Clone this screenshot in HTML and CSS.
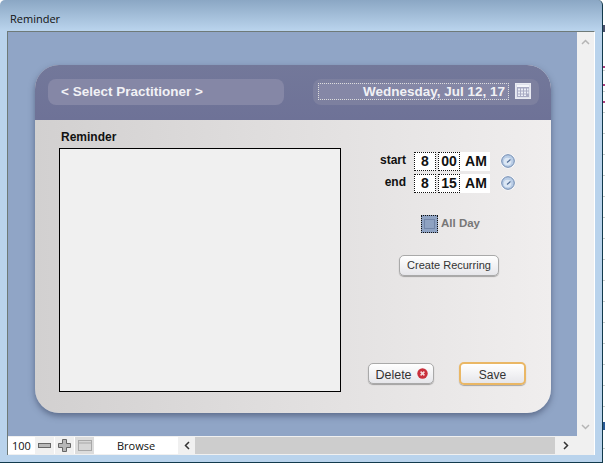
FILE: index.html
```html
<!DOCTYPE html>
<html lang="en">

<head>
    <meta charset="UTF-8">
    <title>Reminder</title>
    <link rel="stylesheet" href="styles.css">
</head>

<body>
    <div class="window">
        <div class="titlebar">Reminder</div>

        <div class="client">
            <div class="top-row">
                <div class="canvas">
                    <div class="card">
                        <div class="card-head">
                            <div class="pill pill-select">&lt; Select Practitioner &gt;</div>
                            <div class="pill pill-date">
                                <div class="date-field">Wednesday, Jul 12, 17</div>
                                <svg class="cal-icon" width="16" height="16" viewBox="0 0 16 16">
                                    <rect x="0.5" y="0.5" width="15" height="15" fill="#dfe1ec" stroke="#e9eaf2"/>
                                    <rect x="2" y="2" width="12" height="12" fill="#a9abc4"/>
                                    <rect x="2" y="2" width="12" height="2" fill="#f4f5fa"/>
                                    <path d="M3 5.5h2v2H3zM6 5.5h2v2H6zM9 5.5h2v2H9zM12 5.5h1.5v2H12zM3 8.500h2v2H3zM6 8.500h2v2H6zM9 8.500h2v2H9zM12 8.500h1.500v2H12zM3 11.500h2v1.500H3zM6 11.500h2v1.500H6zM9 11.500h2v1.500H9z" fill="#eceef6"/>
                                </svg>
                            </div>
                        </div>

                        <div class="card-body">
                            <div class="note-col">
                                <div class="note-label">Reminder</div>
                                <div class="note-box"></div>
                            </div>

                            <div class="side-col">
                                <div class="time-row">
                                    <span class="time-label">start</span>
                                    <span class="time-cell dotted">8</span>
                                    <span class="time-cell dotted">00</span>
                                    <span class="time-cell ampm">AM</span>
                                    <svg class="clock" width="16" height="16" viewBox="0 0 16 16">
                                        <circle cx="8" cy="8" r="7.500" fill="#fafbfd"/>
                                        <circle cx="8" cy="8" r="6.300" fill="#b9cde6" stroke="#6d87ad"/>
                                        <circle cx="7.500" cy="8.500" r="3.800" fill="#dce7f4"/>
                                        <path d="M7 9.500L10.500 6.500" stroke="#4f6b94" stroke-width="1.200" fill="none"/>
                                    </svg>
                                </div>
                                <div class="time-row">
                                    <span class="time-label">end</span>
                                    <span class="time-cell dotted">8</span>
                                    <span class="time-cell dotted">15</span>
                                    <span class="time-cell ampm">AM</span>
                                    <svg class="clock" width="16" height="16" viewBox="0 0 16 16">
                                        <circle cx="8" cy="8" r="7.500" fill="#fafbfd"/>
                                        <circle cx="8" cy="8" r="6.300" fill="#b9cde6" stroke="#6d87ad"/>
                                        <circle cx="7.500" cy="8.500" r="3.800" fill="#dce7f4"/>
                                        <path d="M7 9.500L10.500 6.500" stroke="#4f6b94" stroke-width="1.200" fill="none"/>
                                    </svg>
                                </div>

                                <div class="allday">
                                    <span class="check"><span class="check-inner"></span></span>
                                    <span class="allday-text">All Day</span>
                                </div>

                                <button class="btn btn-recurring">Create Recurring</button>

                                <div class="actions">
                                    <button class="btn btn-delete"><span class="delete-text">Delete</span>
                                        <svg class="delete-icon" width="11" height="11" viewBox="0 0 11 11">
                                            <circle cx="5.500" cy="5.500" r="5.200" fill="#c9303c"/>
                                            <path d="M3.600 3.600l3.800 3.800M7.400 3.600l-3.800 3.800" stroke="#f6dcdc" stroke-width="1.500"/>
                                        </svg>
                                    </button>
                                    <button class="btn btn-save">Save</button>
                                </div>
                            </div>
                        </div>
                    </div>
                </div>

                <div class="vscroll">
                    <svg width="9" height="6" viewBox="0 0 9 6"><path d="M1 5l3.500-3.500L8 5" fill="none" stroke="#b5b5b5" stroke-width="1.500"/></svg>
                    <svg width="9" height="6" viewBox="0 0 9 6"><path d="M1 1l3.500 3.500L8 1" fill="none" stroke="#b5b5b5" stroke-width="1.500"/></svg>
                </div>
            </div>

            <div class="statusbar">
                <span class="zoom-num">100</span>
                <span class="zoom-btn">
                    <svg width="13" height="5" viewBox="0 0 13 5"><rect x="0.500" y="0.500" width="12" height="4" fill="#b8b8b8" stroke="#666"/></svg>
                </span>
                <span class="zoom-btn">
                    <svg width="13" height="13" viewBox="0 0 13 13"><path d="M4.500.5h4v4h4v4h-4v4h-4v-4h-4v-4h4z" fill="#b8b8b8" stroke="#666"/></svg>
                </span>
                <span class="zoom-btn zoom-btn-dim">
                    <svg width="14" height="11" viewBox="0 0 14 11"><rect x="0.500" y="0.500" width="13" height="10" fill="#d6d6d6" stroke="#a8a8a8"/><path d="M1 3h12" stroke="#a8a8a8"/></svg>
                </span>
                <span class="mode">Browse</span>
                <div class="hscroll">
                    <span class="arrow">
                        <svg width="6" height="9" viewBox="0 0 6 9"><path d="M5 1L1.500 4.500 5 8" fill="none" stroke="#333" stroke-width="1.500"/></svg>
                    </span>
                    <span class="hscroll-track"></span>
                    <span class="arrow arrow-right">
                        <svg width="6" height="9" viewBox="0 0 6 9"><path d="M1 1l3.500 3.500L1 8" fill="none" stroke="#333" stroke-width="1.500"/></svg>
                    </span>
                </div>
            </div>
        </div>
    </div>

    <div class="strip"></div>
</body>

</html>
```

FILE: styles.css
```css
* {
    box-sizing: border-box;
}

html,
body {
    margin: 0;
    height: 464px;
    overflow: hidden;
}

body {
    display: flex;
    font-family: "Liberation Sans", Arial, sans-serif;
    color: #111;
    background-color: #fff;
}

.window {
    flex: none;
    width: 603px;
    height: 463px;
    padding: 0 7px 7px;
    background: linear-gradient(to bottom, #8ba7c4 0, #b9d3ec 30px, #b9d3ec 100%);
    border-right: 1px solid #123a4c;
    border-bottom: 1px solid #123a4c;
    border-radius: 5px 5px 0 0;
}

/* what shows of the window behind */
.strip {
    flex: 1;
    background-color: #fff;
    background-image:
        linear-gradient(#4b4f6a, #4b4f6a),
        linear-gradient(#b0407f, #b0407f),
        linear-gradient(#b0407f, #b0407f),
        linear-gradient(#b0407f, #b0407f),
        linear-gradient(#2a5a96, #2a5a96),
        repeating-linear-gradient(to bottom, #fff 0, #fff 20px, #cfcfcf 20px, #cfcfcf 21px);
    background-size: 100% 7px, 100% 2px, 100% 2px, 100% 2px, 100% 8px, 100% 100%;
    background-position: 0 25px, 0 66px, 0 84px, 0 101px, 0 422px, 0 50px;
    background-repeat: no-repeat;
}

.titlebar {
    height: 31px;
    padding: 11px 0 0 3px;
    font-family: "Open Sans", sans-serif;
    font-size: 11px;
    line-height: 15px;
    color: #111;
}

.client {
    height: 424px;
    display: flex;
    flex-direction: column;
    border-top: 1px solid #6e7a78;
    border-left: 1px solid #6e7a78;
    border-right: 1px solid #fff;
    background-color: #f0f0f0;
}

.top-row {
    flex: 1;
    display: flex;
    min-height: 0;
}

.canvas {
    width: 569px;
    padding: 33px 0 0 27px;
    background-color: #90a5c6;
}

.card {
    width: 516px;
    height: 348px;
    border-radius: 24px;
    overflow: hidden;
    box-shadow: 0 3px 6px rgba(50, 60, 90, 0.55);
    background: linear-gradient(to right, #d2d0d0, #f0eeee);
}

.card-head {
    height: 55px;
    padding: 14px 12px 0 13px;
    display: flex;
    justify-content: space-between;
    background: linear-gradient(to bottom, #73789a, #6e7297);
}

.pill {
    height: 26px;
    border-radius: 8px;
    background-color: #8587a6;
    color: #f1f1f5;
    font-weight: bold;
}

.pill-select {
    width: 236px;
    padding-left: 13px;
    font-size: 13.5px;
    line-height: 25px;
}

.pill-date {
    width: 226px;
    padding: 4px 8px 0 5px;
    display: flex;
    gap: 6px;
    background-color: #7d809f;
}

.date-field {
    width: 191px;
    height: 17px;
    padding-right: 3px;
    border: 1px dotted #111;
    outline: 1px dotted #ddd;
    outline-offset: -1px;
    background-color: #8587a6;
    text-align: right;
    font-size: 13.5px;
    line-height: 16px;
}

.card-body {
    display: flex;
    height: 293px;
    padding: 9px 0 0 24px;
}

.note-col {
    width: 282px;
}

.note-label {
    height: 19px;
    padding-left: 2px;
    font-size: 12px;
    font-weight: bold;
    line-height: 16px;
}

.note-box {
    height: 244px;
    background-color: #f0f0f0;
    border: 1px solid #000;
}

.side-col {
    flex: 1;
    padding-top: 21px;
}

.time-row {
    display: flex;
    align-items: center;
    height: 22px;
    padding-left: 22px;
    font-weight: bold;
}

.time-label {
    width: 51px;
    padding-right: 8px;
    padding-bottom: 2px;
    text-align: right;
    font-size: 12px;
}

.time-cell {
    width: 22px;
    height: 19px;
    background-color: #fff;
    text-align: center;
    font-size: 14px;
    line-height: 19px;
}

.dotted {
    border: 1px dotted #111;
    line-height: 17px;
}

.dotted:nth-child(2) {
    margin-right: 2px;
}

.ampm {
    width: 30px;
    padding-left: 2px;
}

.clock {
    margin-left: 10px;
}

.allday {
    display: flex;
    align-items: center;
    gap: 3px;
    margin: 21px 0 0 80px;
    height: 18px;
}

.check {
    width: 17px;
    height: 18px;
    padding: 3px 2px;
    border: 1px dotted #111;
    background-color: #8ea2c2;
}

.check-inner {
    display: block;
    width: 11px;
    height: 10px;
    border: 1px solid #7286a9;
}

.allday-text {
    padding-bottom: 2px;
    font-size: 11.5px;
    font-weight: bold;
    color: #777;
}

.btn {
    font-family: "Liberation Sans", Arial, sans-serif;
    font-size: 12px;
    color: #333;
    border: 1px solid #a9a9a9;
    border-radius: 5px;
    background: linear-gradient(to bottom, #ffffff, #e6e6ea);
    box-shadow: 0 1px 1px rgba(0, 0, 0, 0.3);
    padding: 0 0 1px;
}

.btn-recurring {
    display: block;
    width: 100px;
    height: 21px;
    margin: 22px 0 0 58px;
    font-size: 11px;
}

.actions {
    display: flex;
    align-items: center;
    margin: 86px 0 0 27px;
    gap: 25px;
}

.btn-delete {
    width: 66px;
    height: 21px;
    padding: 0 0 0 1px;
    font-size: 12.5px;
    display: flex;
    align-items: center;
    justify-content: center;
    gap: 5px;
}

.delete-text {
    padding-top: 2px;
}

.delete-icon {
    margin-bottom: 1px;
}

.btn-save {
    width: 67px;
    height: 23px;
    padding: 2px 0 0;
    border: 2px solid #eab765;
    font-size: 12px;
}

.vscroll {
    width: 17px;
    display: flex;
    flex-direction: column;
    justify-content: space-between;
    align-items: center;
    padding: 7px 0 6px;
    background-color: #f0f0f0;
}

.statusbar {
    height: 17px;
    margin-top: 1px;
    margin-bottom: 1px;
    display: flex;
    align-items: stretch;
    background-color: #fff;
}

.zoom-num {
    width: 26px;
    padding-left: 4px;
    font-family: "Open Sans", sans-serif;
    font-size: 11px;
    line-height: 17px;
}

.zoom-btn {
    width: 20px;
    display: flex;
    align-items: center;
    justify-content: center;
    background-color: #f0f0f0;
    border-left: 1px solid #fff;
}

.zoom-btn-dim {
    background-color: #dcdcdc;
}

.mode {
    width: 84px;
    text-align: center;
    font-family: "Open Sans", sans-serif;
    font-size: 11px;
    line-height: 17px;
}

.hscroll {
    flex: 1;
    display: flex;
    padding-right: 17px;
    background-color: #f0f0f0;
}

.arrow {
    width: 17px;
    display: flex;
    align-items: center;
    justify-content: center;
}

.arrow-right {
    width: 22px;
}

.hscroll-track {
    flex: 1;
    background-color: #cdcdcd;
}
```
